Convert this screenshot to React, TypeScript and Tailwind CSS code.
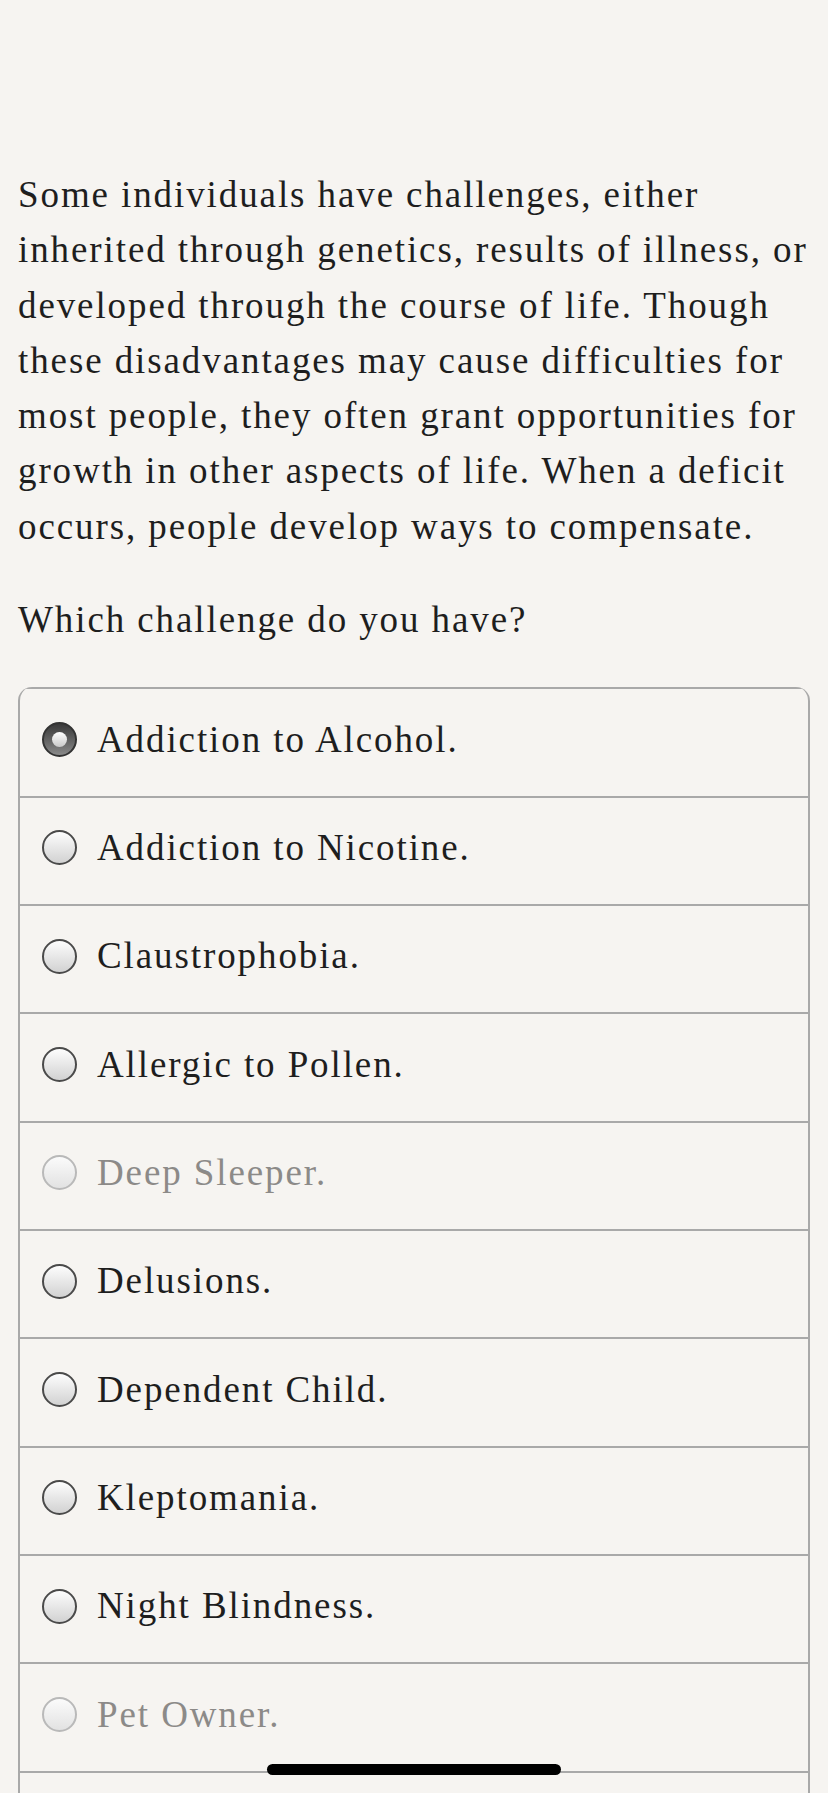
const paragraph = [
  "Some individuals have challenges, either",
  "inherited through genetics, results of illness, or",
  "developed through the course of life. Though",
  "these disadvantages may cause difficulties for",
  "most people, they often grant opportunities for",
  "growth in other aspects of life. When a deficit",
  "occurs, people develop ways to compensate.",
];

interface Option {
  label: string;
  selected?: boolean;
  disabled?: boolean;
}

const options: Option[] = [
  { label: "Addiction to Alcohol.", selected: true },
  { label: "Addiction to Nicotine." },
  { label: "Claustrophobia." },
  { label: "Allergic to Pollen." },
  { label: "Deep Sleeper.", disabled: true },
  { label: "Delusions." },
  { label: "Dependent Child." },
  { label: "Kleptomania." },
  { label: "Night Blindness." },
  { label: "Pet Owner.", disabled: true },
  { label: "" },
];

function Radio({ selected, disabled }: { selected?: boolean; disabled?: boolean }) {
  if (selected) {
    return (
      <span className="flex h-[35px] w-[35px] shrink-0 items-center justify-center rounded-full border-2 border-[#333] bg-linear-to-b from-[#3a3a3a] to-[#8a8a8a]">
        <span className="h-[15px] w-[15px] rounded-full bg-linear-to-b from-white to-[#c9c9c9]" />
      </span>
    );
  }
  return (
    <span
      className={
        disabled
          ? "h-[35px] w-[35px] shrink-0 rounded-full border-2 border-[#b9b9b9] bg-linear-to-b from-[#fbfbfb] to-[#e2e2e2]"
          : "h-[35px] w-[35px] shrink-0 rounded-full border-2 border-[#4a4a4a] bg-linear-to-b from-[#fdfdfd] to-[#d2d2d2]"
      }
    />
  );
}

export default function App() {
  return (
    <div
      className="relative h-[1793px] w-[828px] overflow-hidden bg-[#f6f4f1] text-[#1e1e1e]"
      style={{ fontFamily: '"Liberation Serif", serif' }}
    >
      <div className="px-[18px] pt-[167px]">
        <p className="text-[37px] leading-[55.3px] tracking-[1.9px]">
          {paragraph.map((line, i) => (
            <span key={i} className="block whitespace-nowrap">
              {line}
            </span>
          ))}
        </p>
        <p className="mt-[38px] text-[37px] leading-[55.3px] tracking-[1.9px]">
          Which challenge do you have?
        </p>
      </div>

      {/* option list */}
      <div className="mx-[18px] mt-[40px] overflow-hidden rounded-t-[14px] border-x-2 border-[#a9a9a9]">
        {options.map((opt, i) => (
          <div
            key={i}
            className="flex h-[108.33px] items-center gap-[20px] border-t-2 border-[#a9a9a9] pb-[6px] pl-[22px]"
          >
            {opt.label && <Radio selected={opt.selected} disabled={opt.disabled} />}
            <span
              className={
                opt.disabled
                  ? "text-[37px] tracking-[1.9px] text-[#8c8a88]"
                  : "text-[37px] tracking-[1.9px] text-[#1e1e1e]"
              }
            >
              {opt.label}
            </span>
          </div>
        ))}
      </div>

      {/* home indicator */}
      <div className="absolute bottom-[18px] left-1/2 h-[11px] w-[294px] -translate-x-1/2 rounded-full bg-black" />
    </div>
  );
}
